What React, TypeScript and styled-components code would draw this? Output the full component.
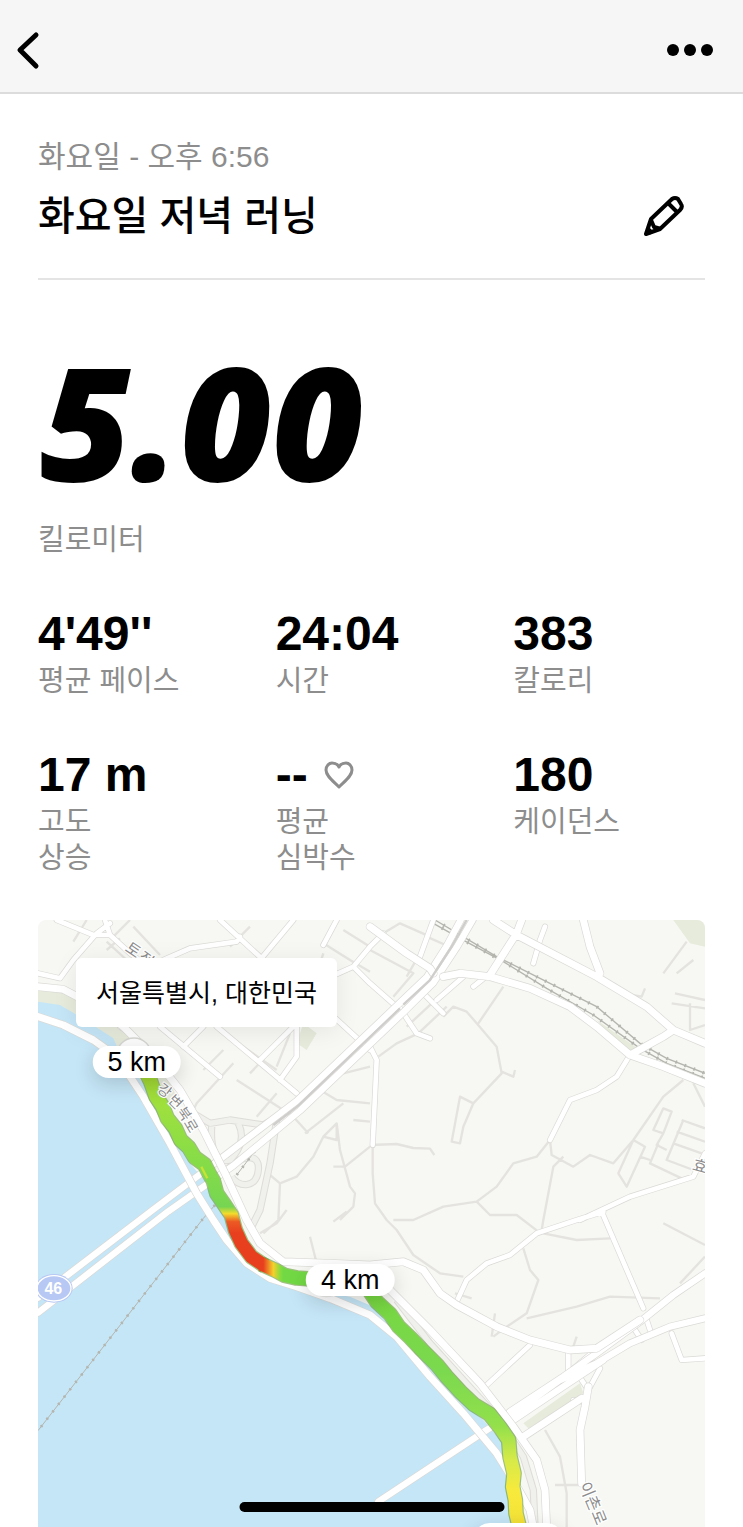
import React from "react";
import styled, { createGlobalStyle } from "styled-components";

const latin = '"Liberation Sans", "Noto Sans CJK KR", sans-serif';

const GlobalStyle = createGlobalStyle`
  *, *::before, *::after { box-sizing: border-box; }
  body { margin: 0; background: #fff; color: #000; font-family: ${latin}; }
  button { border: 0; padding: 0; background: none; color: inherit; cursor: pointer; display: flex; }
  h1, p, dl, dd, dt { margin: 0; font-weight: 400; }
`;

const NavBar = styled.header`
  display: flex;
  align-items: center;
  justify-content: space-between;
  height: 94px;
  padding: 8px 29px 0 16px;
  background: #f6f6f6;
  border-bottom: 2px solid #dcdcdc;
`;

const Page = styled.main`
  padding: 0 38px;
`;

const RunHeading = styled.section`
  padding: 43px 0 34px;
  border-bottom: 2px solid #e4e4e4;
`;

const RunDate = styled.p`
  color: #8d8d8d;
  font-size: 30px;
  line-height: 40px;
`;

const TitleRow = styled.div`
  display: flex;
  align-items: center;
  justify-content: space-between;
  margin-top: 11px;
  padding-right: 20px;
`;

const Title = styled.h1`
  font-size: 40px;
  font-weight: 500;
  line-height: 56px;
`;

const Distance = styled.section`
  padding-top: 68px;
`;

const DistanceValue = styled.p`
  padding-left: 2px;
  font-family: "Open Sans", sans-serif;
  font-size: 158px;
  font-style: italic;
  font-weight: 800;
  line-height: 144px;
`;

const Label = styled.dt`
  color: #8d8d8d;
  font-size: 29px;
  line-height: 36px;
`;

const DistanceLabel = styled(Label).attrs({ as: "p" })`
  margin-top: 30px;
`;

const Stats = styled.dl`
  display: grid;
  grid-template-columns: repeat(3, 1fr);
  gap: 47px 46px;
  margin-top: 47px;
`;

const Stat = styled.div`
  display: flex;
  flex-direction: column-reverse;
  justify-content: flex-end;
`;

const StatValue = styled.dd`
  display: flex;
  align-items: center;
  gap: 16px;
  font-size: 48px;
  font-weight: 700;
  line-height: 58px;
`;

const MapCard = styled.section`
  position: relative;
  margin-top: 44px;
  aspect-ratio: 667 / 607;
  overflow: hidden;
  border-radius: 8px 8px 0 0;
  background: #f7f8f3;
`;

const MapDrawing = styled.svg`
  display: block;
  width: 100%;
  height: 100%;
`;

const Place = styled.p`
  position: absolute;
  top: 38px;
  left: 38px;
  padding: 17px 20px 16px;
  border-radius: 6px;
  background: #fff;
  box-shadow: 0 4px 24px rgba(0, 0, 0, 0.08);
  font-size: 25px;
  line-height: 36px;
`;

const Pin = styled.span<{ $x: number; $y: number }>`
  position: absolute;
  left: ${(p) => p.$x}%;
  top: ${(p) => p.$y}%;
  transform: translate(-50%, -50%);
  padding: 0 15px;
  border-radius: 16px;
  background: #fff;
  box-shadow: 0 6px 20px rgba(0, 0, 0, 0.16);
  font-size: 27px;
  line-height: 32px;
  white-space: nowrap;
`;

const HomeIndicator = styled.div`
  position: fixed;
  bottom: 15px;
  left: 50%;
  width: 265px;
  height: 10px;
  transform: translateX(-50%);
  border-radius: 5px;
  background: #000;
`;

const stats = [
  { value: "4'49''", label: ["평균 페이스"] },
  { value: "24:04", label: ["시간"] },
  { value: "383", label: ["칼로리"] },
  { value: "17 m", label: ["고도", "상승"] },
  { value: "--", label: ["평균", "심박수"], heart: true },
  { value: "180", label: ["케이던스"] },
];

const lanes = [
  "M170 30 130 95 M300 30 250 80 M310 50 390 135 M230 95 290 150 M230 120 270 85 M600 110 660 50 M610 170 740 250 M880 100 960 150 1020 185 M940 60 1020 110 M830 280 880 130",
  "M660 490 820 320 M520 480 580 420 M620 510 760 600 M740 480 640 410 M780 370 740 470 M610 460 500 580 480 620 M680 620 740 550",
  "M940 490 1020 470 M870 540 920 570 1020 580 M790 620 835 670 M940 580 825 670 M920 640 880 680 850 740 800 800 750 820 720 795 M880 680 920 690 920 640 930 720 960 830 975 850 970 890 930 930 M910 770 945 770 1020 710 M970 630 1020 635",
  "M750 820 745 930 700 970 M1045 440 1100 400 1165 370 M1165 370 1250 290 M1240 320 1270 290 1310 305 1340 340 1400 410 1415 490 1330 580 1300 650 1290 700 1265 695 1290 560 1330 580 M1415 485 1450 500 1455 480 M1345 340 1420 230",
  "M1020 705 1100 702 1150 714 1200 716 1213 735 M1028 705 1028 790 1035 880 1070 930 1100 960 1150 1035 1230 1090 1300 1100 M1560 690 1520 740 1450 760 1400 830 1340 875 1240 890 1150 930 1090 930 M1340 875 1380 915 1460 915 1525 965 M1560 690 1565 735 1630 770 1680 735 1750 760 1810 690 1900 560 1960 510 M1600 740 1570 770 1540 930 1535 960",
  "M1480 1015 1500 1080 1525 1110 1490 1210 1430 1250 1390 1280 M1490 1225 1640 1190 1740 1160 1890 1165 M1540 970 1640 990 1740 985 M1900 940 2025 1005 M1950 1120 2025 1040",
  "M1900 595 1870 660 1900 670 1925 605Z M1960 630 1910 750 1990 780 M1955 630 2025 655 M1940 665 2025 695 M1930 700 2015 730 M1885 700 1860 760 1955 805 M1900 670 1880 705 1910 720 M1810 690 1845 710 1790 830 1765 790 1810 690 M1830 740 1860 750 M1990 520 2025 590",
  "M1970 95 1900 190 M1990 150 1940 190 M1935 250 2025 270 M1925 280 2025 295 M1980 280 1980 360 2025 345 M1845 235 1835 260 1780 250 M1020 120 1150 190 1090 260 M1170 130 1130 200 M1190 80 1280 120 M1060 70 1110 40 1200 80 M1130 350 1270 220",
  "M840 980 860 1060 M770 900 740 940 690 970 M950 905 910 935 M1385 1280 1395 1210 M1630 1310 1640 1280 M1275 1150 1325 1165 M1545 1560 1590 1640 1610 1750 1610 1851 M1575 1725 1650 1725",
];

const ramps = [
  "M490 610 540 640 600 630 700 645 780 600",
  "M545 650C540 720 560 760 600 750C640 710 640 670 625 640",
  "M590 780C640 730 690 730 685 780C680 840 620 830 605 800",
  "M740 630 720 760 690 900 660 960",
  "M1100 1170 1200 1300 1400 1520 1480 1640 1510 1740 1515 1851",
];

const streets = [
  "M24 190 90 205 130 150 200 70 240 40 M80 30 190 75 240 75 M225 30 240 75 300 130 370 180",
  "M570 30 700 150 M790 30 690 150 M400 150 480 115 620 95 630 80 M920 30 880 105 M700 150 770 240",
  "M270 350 300 370 M390 350 570 500 M460 410 520 350 M560 350 800 550 M690 450 790 350 M800 350 800 440 750 510 M880 210 970 170 1020 220 1100 290 M970 170 1020 110 M900 310 1020 420",
  "M1020 410 1040 450 1028 705 M1110 295 1160 370 1200 385 M1180 250 1240 310 M1220 270 1300 200 M1330 230 1380 190 M1170 140 1210 30 M1020 110 1060 70",
  "M1800 435 1760 500 1700 540 1620 570 1560 690",
  "M1650 930 1800 860 1990 800 2025 730 M1280 1175 1310 1110 1370 1060 1440 1035 1520 970 1640 930 1720 905 M1715 905 1840 1195",
  "M1365 1430 1500 1305 M1850 1230 1860 1260 M1815 1260 1835 1290 M1925 1270 1955 1350 2025 1345 M1510 160 1530 90 1545 50",
  "M1615 1320 1615 1390 M1625 1380 1690 1325 M1645 1395 1675 1440 1710 1375 M1655 1475 1630 1470",
];

const roads = [
  "M24 230 100 238 180 280 280 350 370 440 450 540 520 660 590 800 650 930 690 1000 760 1055 900 1060 1020 1065 1120 1055 1180 1080 1230 1150 1280 1185 1400 1250 1500 1290 1620 1320 1700 1315",
  "M24 320 100 345 190 390 260 440 340 560 420 700 500 850 550 930 590 990 650 1060 720 1105 800 1130 900 1165 1020 1215 1100 1280 1200 1400 1300 1510 1400 1630 1450 1710 1500 1800 1510 1851",
  "M1020 1120 1080 1140 1200 1260 1350 1420 1450 1550 1520 1650 1545 1740 1550 1851",
  "M1020 50 1130 130 1200 175 1210 190 M1240 200 1290 190 1380 200 1500 235 1620 290 1700 350 1800 435 1900 470 2025 520",
  "M1390 30 1460 75 1700 200 1850 290 1930 360 2025 400 M1660 30 1680 110 1710 190 M1380 195 1460 70 1475 30 M1800 435 1900 380 1930 360",
  "M1675 1430 1665 1490 1650 1560 1655 1720 M1480 1580 1655 1465 M1700 1315 1830 1230",
];

const highways = [
  "M24 1163 368 900 580 740 800 573 1105 283 1190 202 1250 108 1292 30",
  "M24 1208 415 904 610 767 810 602 1120 307 1210 218 1280 112 1328 30",
  "M1045 1775 1370 1560 1450 1510 1590 1410 1700 1360 1800 1300 1920 1250 2025 1225",
  "M1450 1530 1600 1430 1720 1350",
  "M1440 1505 1600 1400 1700 1330 1830 1235 1930 1155 2025 1090",
];

const rail = [
  "M1215 30 1400 140 1560 220 1700 290 1830 400 1910 445 2025 490",
  "M1210 40 1290 85 1420 155 1550 235 1690 315 1830 415 1910 460 2025 505",
];

function Roads({ paths, width }: { paths: string[]; width: number }) {
  const d = paths.join(" ");
  return (
    <g fill="none" strokeLinejoin="round" strokeLinecap="round">
      <path d={d} stroke="#dad9d6" strokeWidth={width + 4} />
      <path d={d} stroke="#ffffff" strokeWidth={width} />
    </g>
  );
}

const routeNorth =
  "M340 470 362 515 378 560 398 590 412 625 436 655 452 690 476 712 494 742 524 764 538 792 550 812 560 850 584 885 604 915 616 960 634 1000 664 1040 705 1068";
const routeMid = "M694 1062 738 1082 764 1096 800 1104 860 1108";
const routeSouth =
  "M1010 1130 1040 1175 1080 1212 1106 1250 1140 1282 1176 1320 1222 1366 1250 1400 1290 1444 1332 1484 1378 1512 1410 1552 1436 1590 1440 1640 1452 1690 1448 1730 1456 1770 1458 1810 1468 1851";

function RunMap() {
  return (
    <MapDrawing viewBox="24 30 2001 1821" preserveAspectRatio="xMinYMin slice" aria-hidden="true">
      <defs>
        <linearGradient id="north" gradientUnits="userSpaceOnUse" x1="0" y1="470" x2="0" y2="1070">
          <stop offset="0" stopColor="#a4d62e" />
          <stop offset="0.2" stopColor="#9ee03e" />
          <stop offset="0.5" stopColor="#84dc49" />
          <stop offset="0.7" stopColor="#76d552" />
          <stop offset="0.735" stopColor="#f2dc2c" />
          <stop offset="0.775" stopColor="#ec5a24" />
          <stop offset="0.83" stopColor="#e8401f" />
          <stop offset="1" stopColor="#e8401f" />
        </linearGradient>
        <linearGradient id="mid" gradientUnits="userSpaceOnUse" x1="700" y1="0" x2="760" y2="0">
          <stop offset="0" stopColor="#e8401f" />
          <stop offset="0.5" stopColor="#f5d02c" />
          <stop offset="0.85" stopColor="#86dc3d" />
          <stop offset="1" stopColor="#72d944" />
        </linearGradient>
        <linearGradient id="south" gradientUnits="userSpaceOnUse" x1="0" y1="1130" x2="0" y2="1851">
          <stop offset="0" stopColor="#76d63f" />
          <stop offset="0.35" stopColor="#7bd94f" />
          <stop offset="0.58" stopColor="#93e04b" />
          <stop offset="0.72" stopColor="#d6ea49" />
          <stop offset="0.85" stopColor="#f8ea3c" />
          <stop offset="1" stopColor="#f3e036" />
        </linearGradient>
      </defs>

      <path
        fill="#e6ebdc"
        d="M24 240 110 250 200 310 300 370 380 440 440 560 400 640 260 440 200 370 100 290 24 280Z M1930 30 2025 30 2025 110 1980 100Z M1700 330 1830 420 1810 440 1760 400Z M1480 1540 1650 1420 1660 1450 1500 1560Z M820 340 860 370 830 420 800 400Z"
      />
      <path
        fill="#c5e6f7"
        d="M24 275 90 285 150 320 250 385 275 440 340 520 410 640 480 760 540 830 590 930 610 1000 670 1070 740 1110 850 1140 960 1160 1030 1190 1100 1270 1180 1350 1290 1470 1360 1530 1420 1600 1450 1700 1475 1851 24 1851Z"
      />
      <path d={lanes.join(" ")} fill="none" stroke="#e4e3df" strokeWidth="7" strokeLinejoin="round" />
      <path d={ramps.join(" ")} fill="none" stroke="#dddcd8" strokeWidth="22" strokeLinejoin="round" />
      <path d={ramps.join(" ")} fill="none" stroke="#f0f0ec" strokeWidth="16" strokeLinejoin="round" />
      <g fill="none" stroke="#b4b5ae">
        <path d={rail.join(" ")} strokeWidth="4" />
        <path d={rail.join(" ")} strokeWidth="10" strokeDasharray="5 24" />
        <path d="M555 885 520 925 24 1562 M620 795 700 690" strokeWidth="3" />
        <path d="M555 885 520 925 24 1562 M620 795 700 690" strokeWidth="8" strokeDasharray="6 22" />
      </g>
      <Roads paths={streets} width={14} />
      <Roads paths={highways} width={19} />
      <Roads paths={roads} width={21} />
      <path d="M730 645 805 587 1110 295 M1120 284 1200 210 1265 110 1310 30" fill="none" stroke="#cfcecc" strokeWidth="7" />

      <circle cx="312" cy="436" r="52" fill="#fff" stroke="#d8d8d4" strokeWidth="4" />
      <circle cx="315" cy="455" r="46" fill="#c9575a" />
      <circle cx="890" cy="1112" r="48" fill="#fff" stroke="#ececea" strokeWidth="4" />

      <g fill="none" strokeLinejoin="round">
        <g stroke="#5f9a2f" strokeOpacity="0.6" strokeWidth="47">
          <path d={routeNorth} />
          <path d={routeMid} />
          <path d={routeSouth} />
        </g>
        <g strokeWidth="40">
          <path d={routeNorth} stroke="url(#north)" />
          <path d={routeMid} stroke="url(#mid)" />
          <path d={routeSouth} stroke="url(#south)" />
        </g>
        <path d="M514 770 532 805" stroke="#c9e236" strokeWidth="7" />
      </g>

      <g fill="#8c8c8c" stroke="#fff" strokeWidth="7" paintOrder="stroke" fontSize="48" textAnchor="middle">
        <text transform="translate(300 134) rotate(34)">토</text>
        <text transform="translate(338 162) rotate(36)">정</text>
        <g fontSize="43">
          <text transform="translate(394 554) rotate(38)">강</text>
          <text transform="translate(426 586) rotate(45)">변</text>
          <text transform="translate(450 620) rotate(55)">북</text>
          <text transform="translate(470 655) rotate(60)">로</text>
        </g>
        <text transform="translate(1655 1745) rotate(68)">이</text>
        <text transform="translate(1673 1786) rotate(68)">촌</text>
        <text transform="translate(1691 1828) rotate(68)">로</text>
        <text transform="translate(2006 785) rotate(15)">효</text>
      </g>
      <ellipse cx="72" cy="1135" rx="56" ry="43" fill="#b7c8f4" />
      <ellipse cx="72" cy="1135" rx="51" ry="38" fill="none" stroke="#fff" strokeWidth="4" />
      <text x="70" y="1152" fill="#fff" fontSize="48" fontWeight="700" textAnchor="middle">
        46
      </text>
    </MapDrawing>
  );
}

export default function App() {
  return (
    <>
      <GlobalStyle />
      <NavBar>
        <button type="button" aria-label="뒤로">
          <svg width="26" height="40" viewBox="0 0 26 40" fill="none" stroke="#000" strokeWidth="5" strokeLinecap="round" strokeLinejoin="round">
            <path d="M20 5 4 20 20 36" />
          </svg>
        </button>
        <button type="button" aria-label="더 보기">
          <svg width="48" height="14" viewBox="0 0 48 14">
            <circle cx="7" cy="7" r="6" />
            <circle cx="24" cy="7" r="6" />
            <circle cx="41" cy="7" r="6" />
          </svg>
        </button>
      </NavBar>
      <Page>
        <RunHeading>
          <RunDate>화요일 - 오후 6:56</RunDate>
          <TitleRow>
            <Title>화요일 저녁 러닝</Title>
            <button type="button" aria-label="이름 편집">
              <svg width="42" height="42" viewBox="0 0 42 42" fill="none" stroke="#000" strokeWidth="4" strokeLinejoin="round">
                <path d="M3 39 8 24 29 4q3-2 6 0l3 5q2 3-1 6L17 34Z" />
                <path d="M25 8l9 9M8 25l3 7 7 2M5 34l4 4" />
              </svg>
            </button>
          </TitleRow>
        </RunHeading>
        <Distance>
          <DistanceValue>5.00</DistanceValue>
          <DistanceLabel>킬로미터</DistanceLabel>
        </Distance>
        <Stats>
          {stats.map((s) => (
            <Stat key={s.label.join(" ")}>
              <Label>
                {s.label.map((line, i) => (
                  <React.Fragment key={line}>
                    {i > 0 && <br />}
                    {line}
                  </React.Fragment>
                ))}
              </Label>
              <StatValue>
                {s.value}
                {s.heart && (
                  <svg width="30" height="28" viewBox="0 0 30 28" fill="none" stroke="#8d8d8d" strokeWidth="3" strokeLinejoin="round" aria-hidden="true">
                    <path d="M15 26C9 20 2 15 2 9C2 5 5 2 8 2C11 2 14 4 15 6C16 4 19 2 22 2C25 2 28 5 28 9C28 15 21 20 15 26Z" />
                  </svg>
                )}
              </StatValue>
            </Stat>
          ))}
        </Stats>
        <MapCard aria-label="러닝 경로 지도">
          <RunMap />
          <Place>서울특별시, 대한민국</Place>
          <Pin $x={14.8} $y={23.4}>5 km</Pin>
          <Pin $x={46.8} $y={59.3}>4 km</Pin>
          <Pin $x={72} $y={102}>3 km</Pin>
        </MapCard>
      </Page>
      <HomeIndicator />
    </>
  );
}
